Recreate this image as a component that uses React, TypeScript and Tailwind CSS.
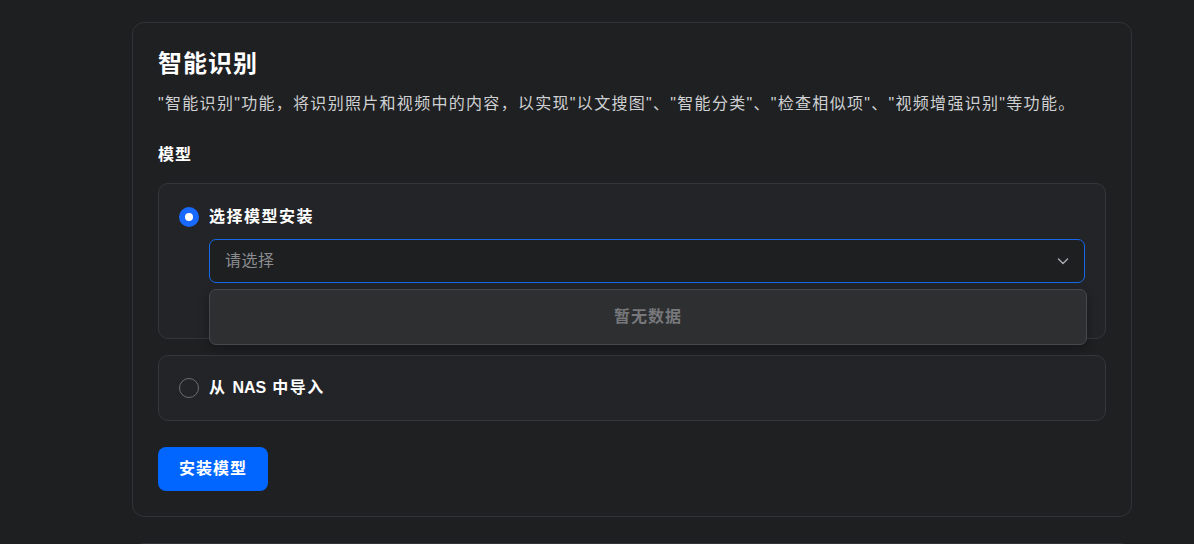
import React from "react";

const font = { fontFamily: '"Liberation Sans", "Noto Sans CJK SC", sans-serif' };

function Radio({ checked }: { checked: boolean }) {
  return checked ? (
    <span className="flex h-5 w-5 shrink-0 items-center justify-center rounded-full bg-[#1769ff]">
      <span className="h-2 w-2 rounded-full bg-white" />
    </span>
  ) : (
    <span className="h-5 w-5 shrink-0 rounded-full border border-[#6b6c6f]" />
  );
}

export default function App() {
  return (
    <div className="min-h-[544px] bg-[#1e1f21] pt-[22px] pb-10" style={font}>
      <div className="ml-[132px] w-[1000px] rounded-[12px] border border-[#323336] bg-[#1f2022] px-[25px] pt-[25px] pb-[25px]">
        <h1 className="text-[24px] font-bold leading-[32px] tracking-[1px] text-white">智能识别</h1>
        <p className="mt-3 whitespace-nowrap text-[16px] leading-[24px] tracking-[1.3px] text-[#cfd0d2]">
          "智能识别"功能，将识别照片和视频中的内容，以实现"以文搜图"、"智能分类"、"检查相似项"、"视频增强识别"等功能。
        </p>
        <div className="mt-[27px] text-[16px] font-bold leading-[24px] tracking-[1px] text-white">模型</div>

        <div className="mt-4 rounded-[10px] border border-[#35363a] bg-[#232427] px-5 pt-[23px] pb-[55px]">
          <div className="flex h-5 items-center gap-[10px]">
            <Radio checked />
            <span className="text-[16px] font-bold leading-5 tracking-[1.5px] text-white">选择模型安装</span>
          </div>
          <div className="relative ml-[30px] mt-3">
            <div className="flex h-[44px] items-center justify-between rounded-[7px] border border-[#1668e8] bg-[#1e1f21] pl-[15px] pr-[14px]">
              <span className="text-[16px] tracking-[0.5px] text-[#8b8c8f]">请选择</span>
              <svg width="14" height="14" viewBox="0 0 14 14" fill="none">
                <path d="M2.5 5l4.5 4.5L11.5 5" stroke="#a6a7aa" strokeWidth="1.5" strokeLinecap="round" strokeLinejoin="round" />
              </svg>
            </div>
            <div className="absolute left-0 right-[-2px] top-[50px] z-10 flex h-[56px] items-center justify-center rounded-[7px] border border-[#47484b] bg-[#2e2f31] shadow-[0_4px_12px_rgba(0,0,0,0.3)]">
              <span className="text-[16px] font-bold tracking-[1px] text-[#77787b]">暂无数据</span>
            </div>
          </div>
        </div>

        <div className="mt-4 rounded-[10px] border border-[#35363a] bg-[#232427] px-5 py-[22px]">
          <div className="flex h-5 items-center gap-[10px]">
            <Radio checked={false} />
            <span className="text-[16px] font-bold leading-5 text-white">
              <span className="tracking-[1.5px]">从 </span>NAS<span className="tracking-[1.5px]"> 中导入</span>
            </span>
          </div>
        </div>

        <button className="mt-[26px] flex h-[44px] w-[110px] items-center justify-center rounded-[8px] bg-[#0066ff] text-[16px] font-bold tracking-[1px] text-white">
          安装模型
        </button>
      </div>

      <div className="ml-[132px] mt-[26px] h-[200px] w-[1000px] rounded-[12px] border border-[#323336] bg-[#1f2022]" />
    </div>
  );
}
